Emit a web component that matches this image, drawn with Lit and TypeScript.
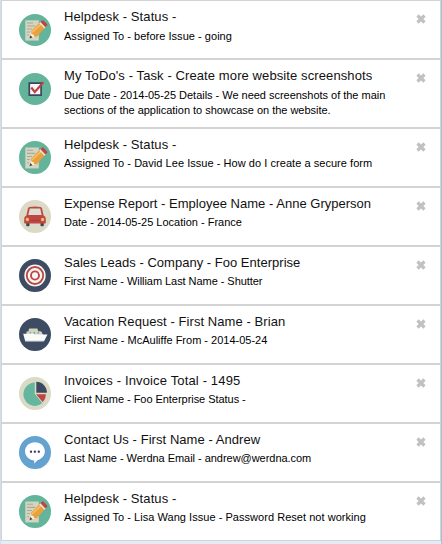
import { LitElement, html, css, svg, TemplateResult } from "lit";
import { customElement, property } from "lit/decorators.js";
import { classMap } from "lit/directives/class-map.js";
import { styleMap } from "lit/directives/style-map.js";

interface Item {
  icon: string;
  title: string;
  lines: string[];
  titleSpacing?: number;
  spacing?: number;
  roomy?: boolean;
}

const ITEMS: Item[] = [
  { icon: "note", title: "Helpdesk - Status -", lines: ["Assigned To - before Issue - going"], spacing: 0.035, roomy: true },
  {
    icon: "check",
    title: "My ToDo's - Task - Create more website screenshots",
    lines: [
      "Due Date - 2014-05-25 Details - We need screenshots of the main",
      "sections of the application to showcase on the website.",
    ],
    spacing: -0.022,
    roomy: true,
  },
  {
    icon: "note",
    title: "Helpdesk - Status -",
    lines: ["Assigned To - David Lee Issue - How do I create a secure form"],
    spacing: 0.045,
  },
  {
    icon: "car",
    title: "Expense Report - Employee Name - Anne Gryperson",
    lines: ["Date - 2014-05-25 Location - France"],
    titleSpacing: 0.015,
  },
  {
    icon: "target",
    title: "Sales Leads - Company - Foo Enterprise",
    lines: ["First Name - William Last Name - Shutter"],
    titleSpacing: 0.02,
    spacing: -0.05,
  },
  {
    icon: "ship",
    title: "Vacation Request - First Name - Brian",
    lines: ["First Name - McAuliffe From - 2014-05-24"],
    titleSpacing: 0.07,
  },
  {
    icon: "pie",
    title: "Invoices - Invoice Total - 1495",
    lines: ["Client Name - Foo Enterprise Status -"],
    titleSpacing: 0.15,
    spacing: -0.045,
  },
  {
    icon: "chat",
    title: "Contact Us - First Name - Andrew",
    lines: ["Last Name - Werdna Email - andrew@werdna.com"],
    titleSpacing: 0.06,
    spacing: -0.035,
  },
  {
    icon: "note",
    title: "Helpdesk - Status -",
    lines: ["Assigned To - Lisa Wang Issue - Password Reset not working"],
    spacing: 0.04,
  },
];

const GREEN = "#63b49b";
const SAND = "#dadac6";
const NAVY = "#3d4b63";

const ICONS: Record<string, { bg: string; art: TemplateResult }> = {
  note: {
    bg: GREEN,
    art: svg`
      <path d="M6.3 6.300h13.500v20.300H6.300z" fill="#d4d4c0"/>
      <path d="M8 9h6M8 12h8M8 15h5M8 18h3M8 21h2" stroke="#aaa99a" stroke-width="1"/>
      <path d="M10.700 24.300 12 17.600l5.400 5.200z" fill="#f8efdc"/>
      <path d="M10.500 24.500l.8-3.200 2.300 2.300z" fill="#36435a"/>
      <path d="M12 17.300 21.200 8.100l5.200 5.200-8.900 9.600-2.400-.3-.5-2.200-2.100-.3z" fill="#e8a13f"/>
      <path d="M13 18.300l9.700-8.700" stroke="#f6bf5d" stroke-width="1.800"/>
      <path d="M20.200 9.200l1.600-1.500 5.100 5.100-1.500 1.600z" fill="#e7e7dc"/>
      <path d="M21.400 8l1.500-1.500q.8-.7 1.700 0l3.400 3.400q.8.900 0 1.700l-1.600 1.600z" fill="#bd4543"/>`,
  },
  check: {
    bg: GREEN,
    art: svg`
      <path d="M10.300 10.200h11.800v12H10.300z" fill="#f7f8f7" stroke="#3d4660" stroke-width="1.700"/>
      <path d="M12.300 14.500l3.500 4.500 8.600-9.700" fill="none" stroke="#bd4141" stroke-width="2.200"/>`,
  },
  car: {
    bg: SAND,
    art: svg`
      <path d="M7.200 22h3.300v2.900q-1.600 1-3.300 0zM21.500 22h3.300v2.900q-1.600 1-3.300 0z" fill="#39465f"/>
      <path d="M9 8Q9.300 6.800 10.500 6.700q5.500-.6 11 0 1.200.1 1.500 1.300l1.600 7.100q2.200 1 2.200 3.200v3.700q0 .8-.9.800H6.100q-.9 0-.9-.8v-3.700q0-2.200 2.200-3.200z" fill="#bf4644"/>
      <path d="M10.800 8.300h10.400l1.500 6.200H9.300z" fill="#dedecf"/>
      <path d="M11.500 19.900h9" stroke="#a63a3c" stroke-width="1"/>
      <circle cx="8.400" cy="18.900" r="1.600" fill="#f5c455"/>
      <circle cx="23.600" cy="18.900" r="1.600" fill="#f5c455"/>`,
  },
  target: {
    bg: NAVY,
    art: svg`
      <circle cx="16" cy="16" r="10.700" fill="#f5f5f2"/>
      <circle cx="16" cy="16" r="8.200" fill="none" stroke="#bd4545" stroke-width="1.800"/>
      <circle cx="16" cy="16" r="4" fill="none" stroke="#bd4545" stroke-width="1.900"/>
      <circle cx="16" cy="16" r="1.300" fill="#f5f5f2"/>`,
  },
  ship: {
    bg: NAVY,
    art: svg`
      <path d="M7.500 16.500v-2.900q0-.8 1-.8h1.200v-1.600q0-1.100 1-1.100h7.600l1.100 2.700h1.800q1 0 1.400.8l1.500 2.900z" fill="#d8d3b8"/>
      <path d="M9.300 14.300h13" stroke="#c5dbd5" stroke-width="1.300"/>
      <circle cx="11.300" cy="14.400" r=".8" fill="#4ba0b4"/>
      <circle cx="15.300" cy="14.400" r=".8" fill="#4ba0b4"/>
      <circle cx="19.300" cy="14.400" r=".8" fill="#4ba0b4"/>
      <path d="M4.200 15.200h10l1 .7h13.300q-1.500 2.500-3 5.900-.4.800-1.200.8H7.200q-.9 0-1.200-.9z" fill="#fbfbfa"/>
      <path d="M6.200 22.300h18.500" stroke="#c9ccd0" stroke-width=".8"/>`,
  },
  pie: {
    bg: SAND,
    art: svg`
      <path d="M15.800 16.500V5.400A11.300 11.300 0 1 0 23.300 25.100z" fill="#64b79e"/>
      <path d="M17.300 15.200V4.600A10.600 10.600 0 0 1 27.900 15.200z" fill="#3d4861"/>
      <path d="M17 16.700H26.800Q26.700 21.500 23.600 24.200z" fill="#bd4545"/>`,
  },
  chat: {
    bg: "#64a3d0",
    art: svg`
      <path d="M16.500 6.500c5.700 0 9.900 3.900 9.900 9 0 4.300-3.100 7.700-7.300 8.600L15.900 27.800v-2.900C10.500 24.700 6.300 20.800 6.300 15.900 6.300 10.700 10.900 6.500 16.500 6.500z" fill="#4a8dbd" opacity=".6"/>
      <path d="M16 6c5.500 0 9.900 3.700 9.900 8.900 0 4.300-3.200 7.700-7.300 8.700l-3.300 3.300v-3C10.200 23.700 6 19.800 6 14.900 6 9.700 10.500 6 16 6z" fill="#fff"/>
      <circle cx="12" cy="15.200" r="1.150" fill="#36405c"/>
      <circle cx="15.900" cy="15.200" r="1.150" fill="#36405c"/>
      <circle cx="19.800" cy="15.200" r="1.150" fill="#36405c"/>`,
  },
};

const tracking = (value?: number) => styleMap(value !== undefined ? { letterSpacing: `${value}px` } : {});

@customElement("feed-item")
export class FeedItem extends LitElement {
  @property({ attribute: false }) item!: Item;

  static styles = css`
    :host {
      display: block;
      background: #fff;
    }
    .row {
      display: flex;
      align-items: flex-start;
      box-sizing: border-box;
      min-height: 57px;
      padding: 0 14px 0 17px;
    }
    .icon {
      flex: none;
      width: 32px;
      height: 33px;
      margin-top: 12px;
    }
    .roomy .icon {
      height: 32px;
      margin-top: 13px;
    }
    .text {
      flex: 1;
      margin-left: 13px;
      padding: 7px 0 9px;
      color: #111;
      white-space: nowrap;
    }
    .title {
      font-size: 13px;
      line-height: 18px;
      letter-spacing: 0.1px;
    }
    .body {
      margin-top: 2px;
      font-size: 11px;
      line-height: 15px;
      color: #000;
    }
    .roomy .body {
      margin-top: 3px;
    }
    .close {
      flex: none;
      width: 10px;
      height: 10px;
      margin-top: 13px;
    }
  `;

  render() {
    const { icon, title, lines, titleSpacing, spacing, roomy } = this.item;
    const { bg, art } = ICONS[icon];
    return html`
      <div class=${classMap({ row: true, roomy: !!roomy })}>
        <svg class="icon" viewBox="0 0 32 32" preserveAspectRatio="none">
          <circle cx="16" cy="16" r="16" fill=${bg}></circle>
          ${art}
        </svg>
        <div class="text">
          <div class="title" style=${tracking(titleSpacing)}>${title}</div>
          <div class="body" style=${tracking(spacing)}>${lines.map((l) => html`<div>${l}</div>`)}</div>
        </div>
        <svg class="close" viewBox="0 0 10 10">
          <path d="M1.500 1.500l7 7M8.500 1.500L1.500 8.500" stroke="#c1c1c1" stroke-width="3.200"></path>
        </svg>
      </div>
    `;
  }
}

@customElement("app-root")
export class AppRoot extends LitElement {
  static styles = css`
    :host {
      display: block;
      box-sizing: border-box;
      height: 544px;
      overflow: hidden;
      background: #e4ecf8;
      border-left: 1px solid #d3deee;
      border-right: 1px solid #a9bfdc;
      font-family: "Liberation Sans", Arial, sans-serif;
    }
    .list {
      display: flex;
      flex-direction: column;
      gap: 2px;
      background: #d3d3d3;
      border: 1px solid #d3d3d3;
    }
  `;

  render() {
    return html`<div class="list">${ITEMS.map((i) => html`<feed-item .item=${i}></feed-item>`)}</div>`;
  }
}
